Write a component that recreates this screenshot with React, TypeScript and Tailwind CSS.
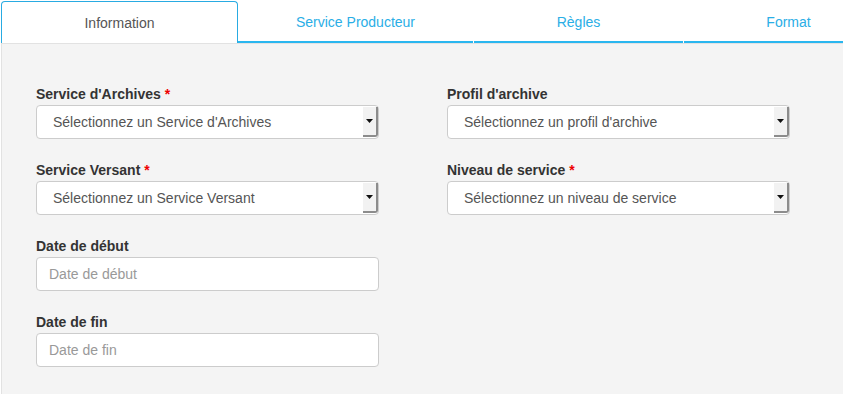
import React from 'react';

const tabs = [
  { label: 'Information', width: 'w-[237px]', active: true },
  { label: 'Service Producteur', width: 'w-[235px]', active: false },
  { label: 'Règles', width: 'w-[209px]', active: false },
  { label: 'Format', width: 'w-[209px]', active: false },
];

const SelectBox: React.FC<{ placeholder: string }> = ({ placeholder }) => (
  <div className="flex h-[34px] w-[343px] items-stretch rounded-[4px] border border-[#ccc] bg-white">
    <div className="flex flex-1 items-center pl-[16px] text-[14px] text-[#555]">{placeholder}</div>
    <div className="my-[1px] flex w-[15px] items-center justify-center rounded-br-[3px] border-r-2 border-b-2 border-[#8c8c8c] bg-[#f2f2f2]">
      <svg width="7" height="4" viewBox="0 0 7 4">
        <path d="M0 0 H7 L3.5 4 Z" fill="#111" />
      </svg>
    </div>
  </div>
);

const InputBox: React.FC<{ placeholder: string }> = ({ placeholder }) => (
  <div className="flex h-[34px] w-[343px] items-center rounded-[4px] border border-[#ccc] bg-white pl-[12px] text-[14px] text-[#999]">
    {placeholder}
  </div>
);

const Field: React.FC<{ label: string; required?: boolean; children: React.ReactNode }> = ({ label, required, children }) => (
  <div className="flex flex-col">
    <label className="mb-[1px] h-5 text-[14px] leading-5 font-bold text-[#333]">
      {label}
      {required && <span className="ml-[4px] text-[#e00]">*</span>}
    </label>
    {children}
  </div>
);

export default function App() {
  return (
    <div className="h-[394px] w-[843px] overflow-hidden bg-white font-['Liberation_Sans',Arial,sans-serif]">
      {/* Tabs */}
      <div className="flex h-[43px] pt-[1px] pl-[1px]">
        {tabs.map((t) =>
          t.active ? (
            <div
              key={t.label}
              className={`${t.width} flex shrink-0 items-center justify-center rounded-t-[4px] border-x border-t border-[#29abe2] bg-white pt-[1px] text-[14px] text-[#555]`}
            >
              {t.label}
            </div>
          ) : (
            <div
              key={t.label}
              className={`${t.width} mr-[1px] flex shrink-0 items-center justify-center border-b-2 border-[#29b6ef] pt-[2px] text-[14px] text-[#2aaee6]`}
            >
              {t.label}
            </div>
          )
        )}
      </div>

      {/* Panel */}
      <div className="ml-[1px] h-full border-t border-l border-[#e2e2e2] bg-[#f4f4f4] pt-[40px] pl-[34px]">
        <div className="grid grid-cols-[343px_343px] gap-x-[68px] gap-y-[21px]">
          <Field label="Service d'Archives" required>
            <SelectBox placeholder="Sélectionnez un Service d'Archives" />
          </Field>
          <Field label="Profil d'archive">
            <SelectBox placeholder="Sélectionnez un profil d'archive" />
          </Field>
          <Field label="Service Versant" required>
            <SelectBox placeholder="Sélectionnez un Service Versant" />
          </Field>
          <Field label="Niveau de service" required>
            <SelectBox placeholder="Sélectionnez un niveau de service" />
          </Field>
          <Field label="Date de début">
            <InputBox placeholder="Date de début" />
          </Field>
          <div />
          <Field label="Date de fin">
            <InputBox placeholder="Date de fin" />
          </Field>
        </div>
      </div>
    </div>
  );
}
